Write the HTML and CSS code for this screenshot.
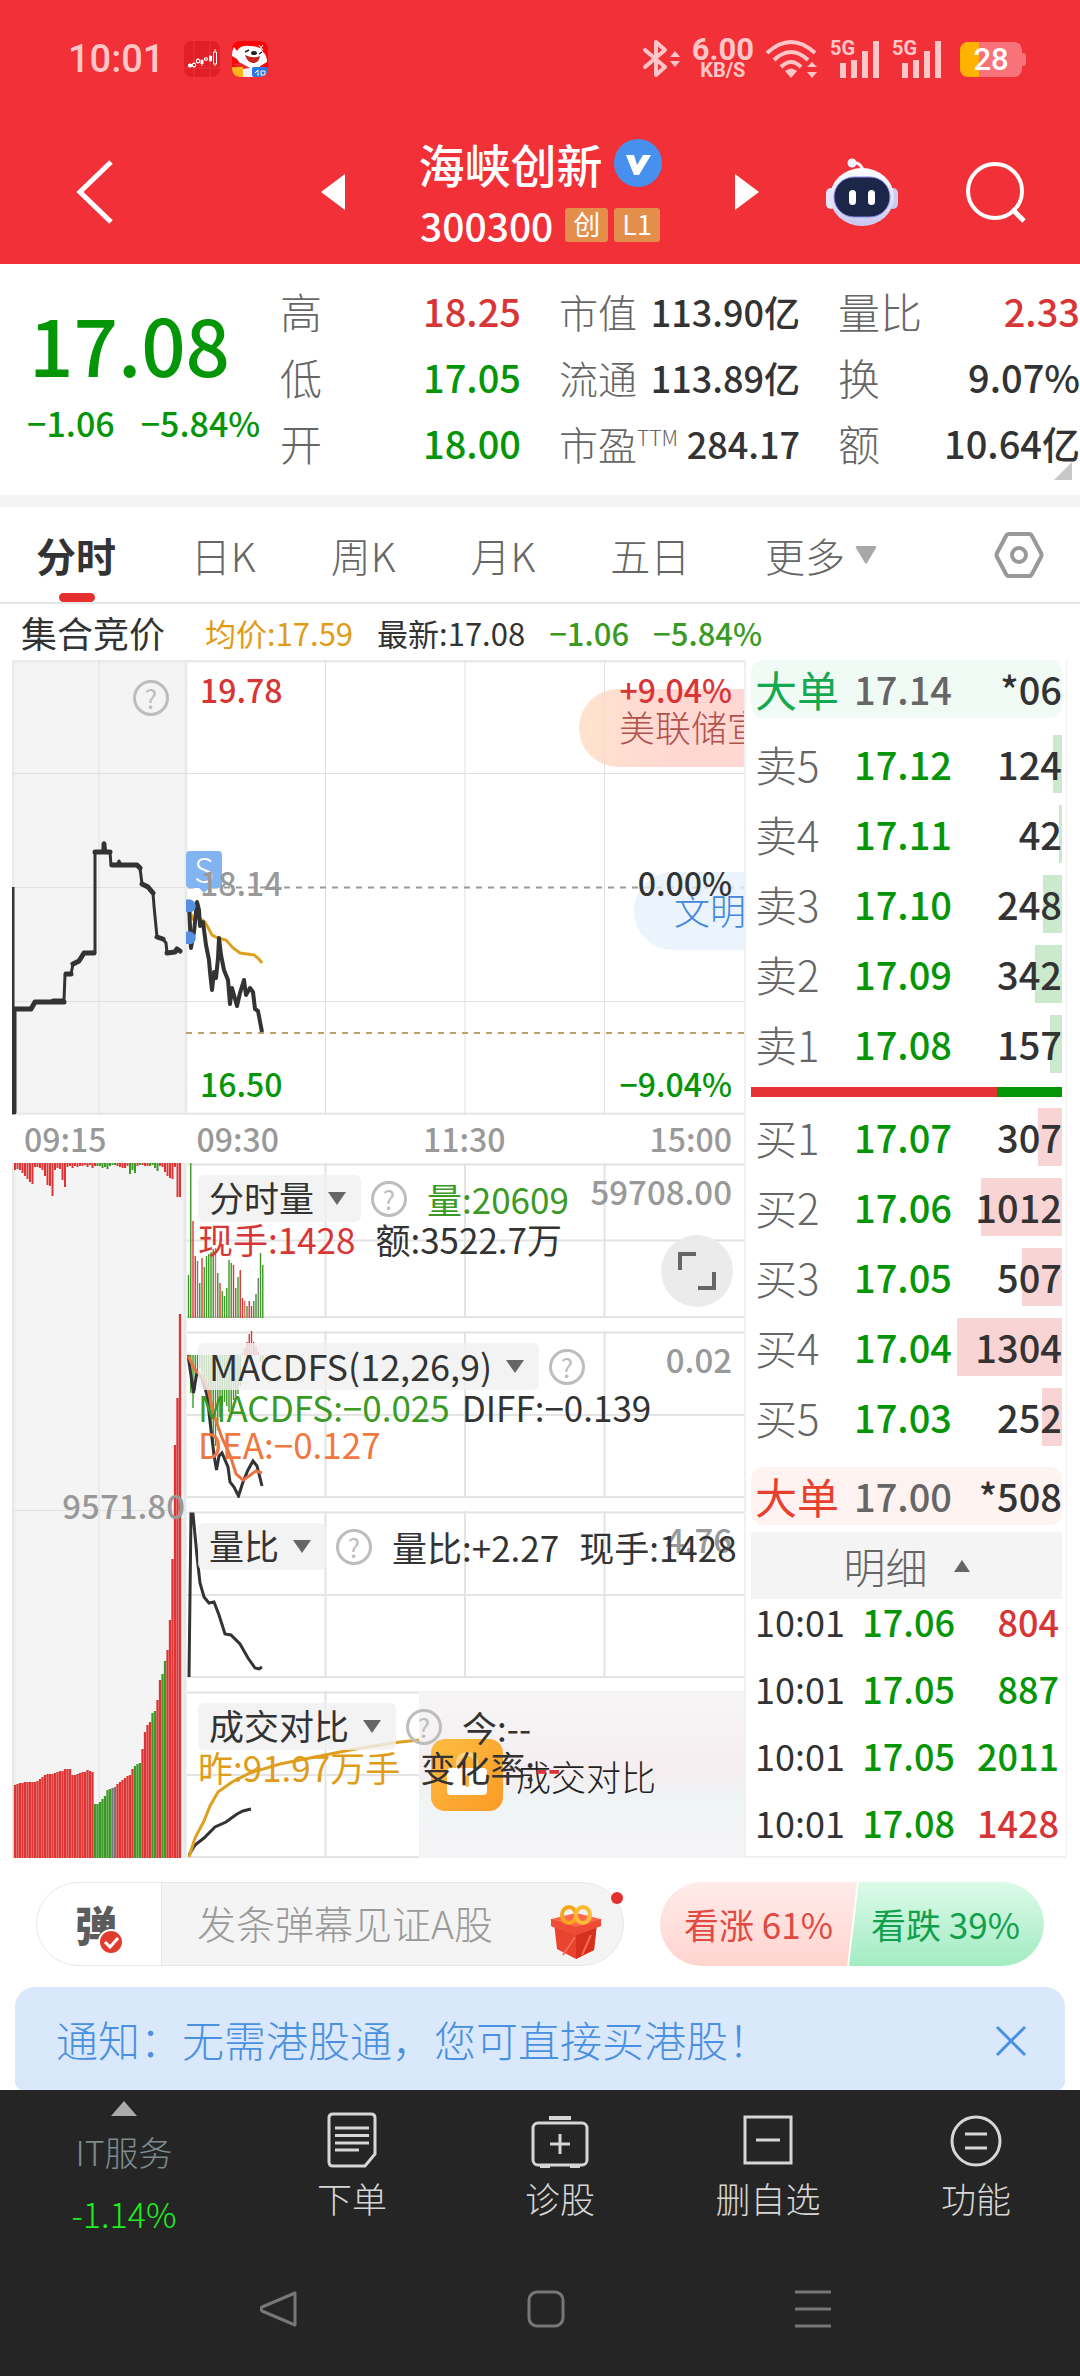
FILE: index.html
```html
<!DOCTYPE html>
<html lang="zh-CN">
<head>
<meta charset="utf-8">
<meta name="viewport" content="width=device-width, initial-scale=1">
<title>海峡创新 300300</title>
<link rel="stylesheet" href="styles.css">
</head>
<body>
<header class="top">
  <div class="status">
    <time class="clock">10:01</time>
    <svg class="app-icon" width="36" height="36" viewBox="0 0 36 36"><rect width="36" height="36" rx="8" fill="#e01f26"/><path d="M10 0V36M26 0V36M0 27H36" stroke="#e8343a"/><path d="M6 22v5M10 21v6M14 17v6M18 18v7M22 16v4M26 14v7M31 8v17" stroke="#ffd9d9" stroke-width="1"/><path d="M4 23h4v3H4zM16.500 19h3v4h-3zM25 15h3v5h-3z" fill="#fff"/><path d="M8.500 22.500h3v3h-3zM12.500 18.500h3v3h-3zM20.500 17h3v2h-3zM29.500 11h3v12h-3z" fill="#e01f26" stroke="#fff"/></svg>
    <svg class="app-icon" width="36" height="36" viewBox="0 0 36 36"><clipPath id="r"><rect width="36" height="36" rx="8"/></clipPath><g clip-path="url(#r)"><rect width="36" height="36" fill="#fb0508"/><path d="M7 36 9 25Q18 21 28 25L30 36Z" fill="#eef1f6"/><path d="M5 10Q8 4 18 5q11 0 13 6 4 3 4 10l-5 3q-3 2-12 2T8 22q-2-2-3-4l-5-3q0-6 2-9Z" fill="#fff"/><path d="M13 14q8 4 15 1-1 7-7 7-6-1-8-8z" fill="#c52520"/><path d="M13 11l4-2M27 13l3-2" stroke="#222" stroke-width="1.500"/><ellipse cx="22" cy="12" rx="3" ry="2" fill="#222"/><path d="M0 23l9-1 9 5-8 1z" fill="#e72b2f"/><rect y="26" width="11" height="10" fill="#ffb31c"/><rect x="20" y="26" width="16" height="10" rx="2" fill="#2f76e0"/><path d="M23 32l3-3v6m3-5h4v4h-4z" stroke="#fff" fill="none"/><path d="M27 4l4 5m0-5-4 5" stroke="#fff"/></g></svg>
    <div class="signals">
      <svg width="38" height="40" viewBox="0 0 38 40"><path d="M3 11 23 28 14 36V3l9 8L3 28" fill="none" stroke="#ffc6c8" stroke-width="4" stroke-linejoin="round" stroke-linecap="round"/><path d="M28 18l5-6 5 6zM28 22h10l-5 6z" fill="#ffc6c8"/></svg>
      <div class="speed"><b>6.00</b><small>KB/S</small></div>
      <svg width="52" height="40" viewBox="0 0 52 40"><g fill="none" stroke="#ffc6c8" stroke-width="4"><path d="M1 14Q25-8 49 14M8 21Q25 5 42 21M15 28Q25 18 35 28"/></g><path d="M19 32q6-5 12 0l-6 7zM41 28l5-5 5 5zM41 33h10l-5 6z" fill="#ffc6c8"/></svg>
      <div class="cell"><b>5G</b><svg width="50" height="40" viewBox="0 0 50 40"><path d="M10 24h6v15h-6zM21 21h6v18h-6zM32 12h6v27h-6zM43 2h6v37h-6z" fill="#ffc6c8"/></svg></div>
      <div class="cell"><b>5G</b><svg width="50" height="40" viewBox="0 0 50 40"><path d="M10 24h6v15h-6zM21 21h6v18h-6zM32 12h6v27h-6zM43 2h6v37h-6z" fill="#ffc6c8"/></svg></div>
      <div class="battery">28</div>
    </div>
  </div>
  <nav class="title-bar">
    <button class="bare back" aria-label="返回"><svg width="40" height="66" viewBox="0 0 40 66"><path d="M37 3 6 33 37 63" fill="none" stroke="#fff" stroke-width="5"/></svg></button>
    <button class="bare prev" aria-label="上一只"><svg width="24" height="36" viewBox="0 0 24 36"><path d="M24 0V36L0 18z" fill="#fff"/></svg></button>
    <div class="stock">
      <h1>海峡创新 <svg width="48" height="48" viewBox="0 0 48 48"><circle cx="24" cy="24" r="24" fill="#4790ee"/><path d="M12 16h8l3 10 6-10h8L25 36h-5z" fill="#fff"/></svg></h1>
      <p><span>300300</span><em>创</em><em>L1</em></p>
    </div>
    <button class="bare next" aria-label="下一只"><svg width="24" height="36" viewBox="0 0 24 36"><path d="M0 0V36L24 18z" fill="#fff"/></svg></button>
    <button class="bare robot" aria-label="助手"><svg width="74" height="70" viewBox="0 0 74 70"><defs><linearGradient id="hd" x2="0" y2="1"><stop stop-color="#fff"/><stop offset="1" stop-color="#c9c8ef"/></linearGradient></defs><path d="M26 6q10-2 12 8" fill="none" stroke="#f4f2ff" stroke-width="3"/><circle cx="27" cy="6" r="4.500" fill="#f4f2ff"/><rect x="1" y="31" width="10" height="21" rx="5" fill="#e6e6fb"/><rect x="63" y="31" width="10" height="21" rx="5" fill="#c8cdf2"/><ellipse cx="37" cy="40" rx="32" ry="29" fill="url(#hd)"/><rect x="9" y="20" width="56" height="40" rx="20" fill="#1b2648" stroke="#8b8aee" stroke-width="1"/><rect x="24" y="33" width="7" height="15" rx="3.500" fill="#fff"/><rect x="43" y="33" width="7" height="15" rx="3.500" fill="#fff"/></svg></button>
    <button class="bare search" aria-label="搜索"><svg width="62" height="64" viewBox="0 0 62 64"><circle cx="30" cy="31" r="27" fill="none" stroke="#fff" stroke-width="4"/><path d="M47 49 59 61" stroke="#fff" stroke-width="5"/></svg></button>
  </nav>
</header>

<section class="quote">
  <div class="last"><strong>17.08</strong><p><span>−1.06</span><span>−5.84%</span></p></div>
  <dl class="wide">
    <div><dt>高</dt><dd class="red">18.25</dd></div>
    <div><dt>低</dt><dd class="green">17.05</dd></div>
    <div><dt>开</dt><dd class="green">18.00</dd></div>
  </dl>
  <dl class="tight">
    <div><dt>市值</dt><dd>113.90亿</dd></div>
    <div><dt>流通</dt><dd>113.89亿</dd></div>
    <div><dt>市盈<sup>TTM</sup></dt><dd>284.17</dd></div>
  </dl>
  <dl class="wide">
    <div><dt>量比</dt><dd class="red">2.33</dd></div>
    <div><dt>换</dt><dd>9.07%</dd></div>
    <div><dt>额</dt><dd>10.64亿</dd></div>
  </dl>
  <svg class="corner" width="18" height="18" viewBox="0 0 18 18"><path d="M18 0V18H0z" fill="#c8c8c8"/></svg>
</section>

<nav class="tabs">
  <button class="bare on">分时</button>
  <button class="bare">日K</button>
  <button class="bare">周K</button>
  <button class="bare">月K</button>
  <button class="bare">五日</button>
  <button class="bare more">更多<svg width="22" height="18" viewBox="0 0 22 18"><path d="M2 0H20Q22 0 21 2L12 17q-1 1-2 0L1 2Q0 0 2 0z" fill="#a8a8a8"/></svg></button>
  <button class="bare gear" aria-label="设置"><svg width="50" height="48" viewBox="0 0 50 48"><path d="M15 3H35Q37 3 38 5L47 22q1 2 0 4L38 43q-1 2-3 2H15q-2 0-3-2L3 26q-1-2 0-4L12 5q1-2 3-2z" fill="none" stroke="#999" stroke-width="4"/><circle cx="25" cy="24" r="7" fill="none" stroke="#999" stroke-width="4"/></svg></button>
</nav>

<p class="summary"><span class="auction-label">集合竞价</span><span class="amber">均价:17.59</span><span>最新:17.08</span><span class="leaf">−1.06</span><span class="leaf">−5.84%</span></p>

<main class="board">
  <div class="charts">
    <div class="price">
      <svg class="plot" viewBox="12 660 732 455" preserveAspectRatio="none">
        <path d="M12 660H186V1115H12z" fill="#f4f4f4"/>
        <path d="M12 661H744M12 1114H744M13 660V1115M186 660V1115" stroke="#eaeaea" stroke-width="3" fill="none"/>
        <path d="M12 773.500H744M12 887.500H186M12 1001.500H744M99 660V1115M325.500 660V1115M465 660V1115M604.500 660V1115" stroke="#e0e0e0" fill="none"/>
        <path d="M188 887.500H744" stroke="#999" stroke-width="2" stroke-dasharray="6 6"/>
        <path d="M186 1033H744" stroke="#bfa06c" stroke-width="2" stroke-dasharray="6 6"/>
        <path d="M13 887V1113" stroke="#333" stroke-width="3"/>
        <path d="M12 1113 14 1111V1009H31L35 1002H50L53 1000H64L65 975 71 974 73 964 79 961 84 953 95 952V852H103L104 843 106 852H110L111 865 118 864 119 861 121 865H137L140 868 142 884 148 887 153 893 154 906 157 937 163 939 166 943 167 953 175 952 177 949 180 951" fill="none" stroke="#333" stroke-width="3" stroke-linejoin="round" stroke-linecap="round"/>
        <path d="M14 1009V1112M14 1009H31L35 1002H64M66 974H71M73 964 79 961 84 953H94M95 852H110M104 844V852M112 865H137L140 868M142 884 148 887 153 893M157 937 163 939M167 953 175 952 177 949 180 951" fill="none" stroke="#333" stroke-width="5" stroke-linejoin="round" stroke-linecap="round"/>
        <path d="M190 851H218Q222 851 222 855V884Q222 888 218 888H209L204 893 199 888H190Q186 888 186 884V855Q186 851 190 851z" fill="#82b4f2"/>
        <path d="M190 912 193 919 199 918 205 922 212 935 218 938 226 940 233 948 240 953 254 955 258 958 262 963" fill="none" stroke="#dfa022" stroke-width="3"/>
        <path d="M189 905 191 948 194 932 197 902 199 910 200 926 203 922 206 945 209 960 210 972 212 990 214 972 216 978 218 958 219 938 221 955 224 970 228 980 230 1004 232 988 237 1006 240 993 244 980 246 995 250 988 253 992 255 1009 258 1011 262 1032" fill="none" stroke="#333" stroke-width="4" stroke-linejoin="round"/>
        <path d="M186 900a6 6 0 0 1 6 12h-6zM186 932a6 6 0 0 1 6 12h-6z" fill="#5590e0"/>
      </svg>
      <button class="bare help auction-help" aria-label="集合竞价说明">?</button>
      <span class="marker">S</span>
      <a class="bubble warm" href="#fed">美联储宣</a>
      <a class="bubble cool" href="#civil">文明</a>
      <span class="axis high red">19.78</span><span class="axis mid grey">18.14</span><span class="axis low green">16.50</span>
      <span class="axis pct high red">+9.04%</span><span class="axis pct mid">0.00%</span><span class="axis pct low green">−9.04%</span>
    </div>
    <div class="times"><time>09:15</time><time>09:30</time><time>11:30</time><time>15:00</time></div>
    <div class="lower">
      <div class="auction-volume">
        <svg class="plot" viewBox="12 1163 175 695" preserveAspectRatio="none">
          <path d="M12 1163H186V1858H12z" fill="#f4f4f4"/>
          <path d="M12 1163.500H186M13 1163V1858M185 1163V1858" stroke="#e8e8e8" stroke-width="3"/>
          <path d="M99 1163V1858M12 1510.500H186" stroke="#e0e0e0"/>
          <g id="auction-top"></g><g id="auction-bottom"></g>
        </svg>
        <span class="scale">9571.80</span>
      </div>
      <div class="panels">
        <section class="panel short">
          <svg class="plot" viewBox="187 1163 557 155" preserveAspectRatio="none">
            <path class="grid" d="M187 1164.500H744M187 1240.500H744M187 1317H744M325.500 1163V1318M465 1163V1318M604.500 1163V1318"/>
            <g id="minute-volume"></g>
          </svg>
          <div class="line"><label class="chip"><select aria-label="指标一"><option>分时量</option></select><i></i></label><button class="bare help" aria-label="说明">?</button><span class="leaf">量:20609</span></div>
          <div class="line"><span class="red">现手:1428</span><span>额:3522.7万</span></div>
          <span class="scale">59708.00</span>
          <button class="bare expand" aria-label="全屏"><svg width="38" height="38" viewBox="0 0 38 38"><path d="M2 18V2H18M36 20V36H20" fill="none" stroke="#666" stroke-width="4"/></svg></button>
        </section>
        <section class="panel">
          <svg class="plot" viewBox="187 1331 557 167" preserveAspectRatio="none">
            <path class="grid" d="M187 1332.500H744M187 1415H744M187 1497H744M325.500 1331V1498M465 1331V1498M604.500 1331V1498"/>
            <g id="macd-bars"></g>
            <path d="M188 1355 193.500 1393 197 1372 202 1378 207 1395 211 1430 214 1455 216.500 1470 219 1456 222 1453 228 1467 230 1482 234 1487 238.500 1496 243 1482 248 1470 253 1461 257 1466 262 1486" fill="none" stroke="#333" stroke-width="3"/>
            <path d="M188 1356 195 1370 202 1376 208 1388 213 1412 222 1438 230 1455 236 1474 243 1480 249 1476 256 1471 262 1473" fill="none" stroke="#ea7440" stroke-width="3"/>
          </svg>
          <div class="line"><label class="chip formula"><select aria-label="指标二"><option>MACDFS(12,26,9)</option></select><i></i></label><button class="bare help" aria-label="说明">?</button></div>
          <div class="line snug"><span class="leaf">MACDFS:−0.025</span><span>DIFF:−0.139</span></div>
          <div class="line"><span class="orange">DEA:−0.127</span></div>
          <span class="scale">0.02</span>
        </section>
        <section class="panel">
          <svg class="plot" viewBox="187 1511 557 167" preserveAspectRatio="none">
            <path class="grid" d="M187 1512.500H744M187 1595H744M187 1677H744M325.500 1511V1678M465 1511V1678M604.500 1511V1678"/>
            <path d="M189 1677 191 1514H193L197 1556 200 1583 204 1597 209 1603 214 1602 219 1615 225 1634 231 1635 240 1644 248 1658 255 1668 259 1669 262 1667" fill="none" stroke="#333" stroke-width="3"/>
          </svg>
          <span class="scale">4.76</span>
          <div class="line"><label class="chip"><select aria-label="指标三"><option>量比</option></select><i></i></label><button class="bare help" aria-label="说明">?</button><span>量比:+2.27</span><span>现手:1428</span></div>
        </section>
        <section class="panel">
          <svg class="plot" viewBox="187 1691 557 167" preserveAspectRatio="none">
            <path class="grid" d="M187 1692.500H744M187 1775H744M187 1857H744M325.500 1691V1858"/>
            <path d="M189 1855 195 1845 204 1838 215 1827 226 1822 237 1814 243 1811 251 1809" fill="none" stroke="#333" stroke-width="3"/>
            <path d="M189 1857 195 1838 204 1821 210 1806 218 1792 232 1782 250 1773 280 1764 310 1758 350 1750 380 1745 400 1742 420 1740" fill="none" stroke="#dfa022" stroke-width="3"/>
          </svg>
          <div class="locked"><svg width="72" height="72" viewBox="0 0 72 72"><defs><linearGradient id="lk" x2="1" y2="1"><stop stop-color="#fdbd42"/><stop offset="1" stop-color="#fb9a26"/></linearGradient></defs><rect width="72" height="72" rx="14" fill="url(#lk)"/><path d="M27 30V24a9 9 0 0 1 18 0v6" fill="none" stroke="#fdd58a" stroke-width="4"/><rect x="16" y="29" width="40" height="27" rx="4" fill="#fff"/><path d="M36 38v8" stroke="#fbb040" stroke-width="4" stroke-linecap="round"/></svg><span>成交对比</span></div>
          <div class="line"><label class="chip"><select aria-label="指标四"><option>成交对比</option></select><i></i></label><button class="bare help" aria-label="说明">?</button><span>今:--</span></div>
          <div class="line"><span class="amber">昨:91.97万手</span><span>变化率:<b class="red">--</b></span></div>
        </section>
      </div>
    </div>
  </div>

  <aside class="book">
    <div class="order big sell"><span>大单</span><span>17.14</span><span>*06</span></div>
    <div class="ladder asks">
      <div class="order"><span>卖5</span><span>17.12</span><span>124</span><i style="width:9px"></i></div>
      <div class="order"><span>卖4</span><span>17.11</span><span>42</span><i style="width:3px"></i></div>
      <div class="order"><span>卖3</span><span>17.10</span><span>248</span><i style="width:19px"></i></div>
      <div class="order"><span>卖2</span><span>17.09</span><span>342</span><i style="width:27px"></i></div>
      <div class="order"><span>卖1</span><span>17.08</span><span>157</span><i style="width:12px"></i></div>
    </div>
    <div class="ratio"></div>
    <div class="ladder bids">
      <div class="order"><span>买1</span><span>17.07</span><span>307</span><i style="width:24px"></i></div>
      <div class="order"><span>买2</span><span>17.06</span><span>1012</span><i style="width:81px"></i></div>
      <div class="order"><span>买3</span><span>17.05</span><span>507</span><i style="width:40px"></i></div>
      <div class="order"><span>买4</span><span>17.04</span><span>1304</span><i style="width:105px"></i></div>
      <div class="order"><span>买5</span><span>17.03</span><span>252</span><i style="width:20px"></i></div>
    </div>
    <div class="order big buy"><span>大单</span><span>17.00</span><span>*508</span></div>
    <button class="bare detail">明细<svg width="16" height="12" viewBox="0 0 16 12"><path d="M8 0 16 12H0z" fill="#666"/></svg></button>
    <table class="trades">
      <tr><td>10:01</td><td>17.06</td><td class="red">804</td></tr>
      <tr><td>10:01</td><td>17.05</td><td class="green">887</td></tr>
      <tr><td>10:01</td><td>17.05</td><td class="green">2011</td></tr>
      <tr><td>10:01</td><td>17.08</td><td class="red">1428</td></tr>
    </table>
  </aside>
</main>

<section class="social">
  <div class="chat">
    <button class="bare danmu" aria-label="弹幕开关">弹<svg width="26" height="26" viewBox="0 0 26 26"><circle cx="13" cy="13" r="12" fill="#e03c30" stroke="#fff" stroke-width="2"/><path d="M7 13l5 5 8-9" fill="none" stroke="#fff" stroke-width="3"/></svg></button>
    <input type="text" placeholder="发条弹幕见证A股" aria-label="弹幕">
    <button class="bare gift" aria-label="礼物"><svg width="50" height="54" viewBox="0 0 50 54"><path d="M3 18 24 27 46 18 43 45 25 54 6 44z" fill="#e8432f"/><path d="M25 27 46 18 43 45 25 54z" fill="#d6301f"/><path d="M0 14 25 8 50 14V21L25 30 0 21z" fill="#fb6a4d"/><path d="M0 14 25 22 50 14V21L25 30 0 21z" fill="#ee4c35"/><ellipse cx="18" cy="10" rx="7" ry="8" fill="none" stroke="#f6a71c" stroke-width="4"/><ellipse cx="32" cy="10" rx="7" ry="8" fill="none" stroke="#fdbb35" stroke-width="4"/><path d="M12 50 24 32M31 50 40 30" stroke="#f8694e" stroke-width="2"/></svg></button>
    <span class="dot"></span>
  </div>
  <div class="vote"><button class="bare up">看涨 61%</button><button class="bare down">看跌 39%</button></div>
</section>

<section class="notice"><p>通知：无需港股通，您可直接买港股！</p><button class="bare" aria-label="关闭"><svg width="32" height="32" viewBox="0 0 32 32"><path d="M2 2 30 30M30 2 2 30" stroke="#4a90e0" stroke-width="3"/></svg></button></section>

<footer class="dock">
  <nav class="actions">
    <a class="index" href="#it"><svg width="26" height="15" viewBox="0 0 26 15"><path d="M13 0 26 15H0z" fill="#aaa"/></svg><span>IT服务</span><b>-1.14%</b></a>
    <a href="#order"><svg width="60" height="56" viewBox="0 0 60 56"><path d="M11 2H49Q53 2 53 6V42L43 54H11Q7 54 7 50V6Q7 2 11 2z" fill="none" stroke="#d6d6d6" stroke-width="3"/><path d="M13 16H47M13 23.500H47M13 31H47M13 38H37" stroke="#d6d6d6" stroke-width="3"/></svg>下单</a>
    <a href="#check"><svg width="60" height="56" viewBox="0 0 60 56"><rect x="3" y="11" width="54" height="42" rx="5" fill="none" stroke="#d6d6d6" stroke-width="3"/><path d="M19 6H41M10 55H20M40 55H50" stroke="#d6d6d6" stroke-width="4"/><path d="M30 22V42M20 32H40" stroke="#d6d6d6" stroke-width="3"/></svg>诊股</a>
    <a href="#remove"><svg width="60" height="56" viewBox="0 0 60 56"><rect x="7" y="5" width="46" height="46" fill="none" stroke="#d6d6d6" stroke-width="3"/><path d="M18 28H42" stroke="#d6d6d6" stroke-width="3"/></svg>删自选</a>
    <a href="#features"><svg width="60" height="56" viewBox="0 0 60 56"><circle cx="30" cy="29" r="24" fill="none" stroke="#d6d6d6" stroke-width="3"/><path d="M19 22H41M19 36H41" stroke="#d6d6d6" stroke-width="3"/></svg>功能</a>
  </nav>
  <nav class="system">
    <button class="bare" aria-label="返回"><svg width="38" height="38" viewBox="0 0 38 38"><path d="M35 3V35L2 21Q0 19 2 17z" fill="none" stroke="#777" stroke-width="3" stroke-linejoin="round"/></svg></button>
    <button class="bare" aria-label="主屏幕"><svg width="38" height="38" viewBox="0 0 38 38"><rect x="2" y="2" width="34" height="34" rx="8" fill="none" stroke="#777" stroke-width="3"/></svg></button>
    <button class="bare" aria-label="最近任务"><svg width="38" height="38" viewBox="0 0 38 38"><path d="M1 2H37M1 19H37M1 36H37" stroke="#777" stroke-width="3"/></svg></button>
  </nav>
</footer>
<script src="charts.js"></script>
</body>
</html>
```
FILE: styles.css
```css
* { box-sizing: border-box; }
body { margin: 0; background: #fff; color: #333; font-family: "Noto Sans CJK SC", sans-serif; font-size: 35px; }
h1, p, dl, dd { margin: 0; }
svg { display: block; flex: none; }
a { color: inherit; text-decoration: none; }
.bare { border: 0; padding: 0; background: none; font: inherit; color: inherit; }
.red { color: #d83636; }
.green { color: #059608; }
.leaf { color: #3a9a24; }
.amber { color: #e09c18; }
.orange { color: #f07840; }
.grey { color: #999; }

.top { background: #f23038; color: #fff; }
.status { display: flex; align-items: center; gap: 12px; height: 120px; padding: 0 54px 2px 68px; color: #ffc6c8; font-family: Roboto, sans-serif; }
.clock { font-size: 38px; font-weight: 500; margin-right: 8px; }
.signals { display: flex; align-items: center; gap: 12px; margin-left: auto; }
.speed { display: grid; justify-items: center; }
.speed b { font-size: 31px; font-weight: 700; line-height: 22px; }
.speed small { font-size: 20px; font-weight: 700; line-height: 18px; }
.cell { position: relative; }
.cell b { position: absolute; left: 0; top: -2px; font-size: 20px; line-height: 22px; }
.battery { position: relative; width: 62px; height: 35px; margin: 0 4px 0 6px; border-radius: 8px; background: linear-gradient(90deg, #ffb300 30%, #f77379 30%); color: #fff; font-size: 31px; font-weight: 500; line-height: 36px; text-align: center; }
.battery::after { content: ""; position: absolute; left: 62px; top: 11px; width: 4px; height: 13px; border-radius: 0 3px 3px 0; background: #f77379; }
.title-bar { display: grid; grid-template-columns: 321px 24px 1fr 24px 66px 74px 66px 62px 53px; align-items: center; height: 144px; }
.title-bar .back { padding: 0 0 0 74px; }
.title-bar .robot { grid-column: 6; }
.title-bar .search { grid-column: 8; }
.stock { display: grid; justify-items: center; }
.stock h1 { display: flex; align-items: center; gap: 11px; font-size: 46px; font-weight: 500; line-height: 66px; }
.stock p { display: flex; align-items: center; font-size: 39px; font-weight: 500; line-height: 58px; }
.stock em { margin-left: 6px; padding: 0 8px 2px; border-radius: 3px; background: #e48e4c; font-size: 27px; font-style: normal; font-weight: 400; line-height: 32px; }
.stock span { margin-right: 6px; }

.quote { position: relative; display: grid; grid-template-columns: 262px 241px 241px 1fr; column-gap: 38px; height: 243px; padding: 14px 0 0; border-bottom: 12px solid #f4f4f4; font-size: 36px; line-height: 66px; }
.quote > .last { margin-right: -38px; padding: 15px 0 0 29px; color: #059608; }
.quote > .wide { margin-left: -20px; }
.quote > .tight { margin-left: -20px; }
.quote > dl { margin-right: 20px; }
.quote > dl:last-of-type { margin-right: 0; }
.last strong { display: block; font-size: 78px; font-weight: 500; line-height: 100px; }
.last p { display: flex; gap: 26px; margin-left: -2px; font-size: 34px; font-weight: 500; line-height: 60px; white-space: nowrap; }
.quote dl div { display: flex; justify-content: space-between; white-space: nowrap; }
.quote dt { color: #666; font-size: 39px; font-weight: 300; }
.quote dd { font-weight: 500; }
.quote .wide dt { font-size: 42px; }
.wide dd { font-size: 38px; }
.quote sup { font-size: 21px; line-height: 20px; vertical-align: 14px; }
.corner { position: absolute; right: 8px; bottom: 15px; }

.tabs { display: flex; align-items: center; height: 97px; padding: 0 36px; border-bottom: 2px solid #e6e6e6; color: #666; font-size: 40px; font-weight: 300; justify-content: space-between; }
.tabs .on { position: relative; color: #333; font-weight: 700; }
.tabs .on::after { content: ""; position: absolute; left: 23px; bottom: -18px; width: 36px; height: 9px; border-radius: 5px; background: #e63030; }
.tabs .more { display: flex; align-items: center; gap: 10px; }
.tabs .gear { margin-left: 42px; }
.summary { display: flex; gap: 24px; padding: 0 21px; font-size: 31px; line-height: 57px; height: 56px; white-space: nowrap; }
.summary .auction-label { margin-right: 16px; font-size: 36px; }
.summary .leaf { font-weight: 500; }

.board { display: grid; grid-template-columns: 1fr 323px; padding: 0 13px 0 12px; }
.plot { position: absolute; inset: 0; width: 100%; height: 100%; }
.grid { fill: none; stroke: #e4e4e4; stroke-width: 2; }
.price { position: relative; height: 455px; overflow: hidden; }
.axis { position: absolute; left: 188px; font-size: 32px; font-weight: 500; line-height: 40px; }
.axis.pct { left: auto; right: 12px; }
.axis.high { top: 9px; }
.axis.mid { top: 202px; }
.axis.low { top: 403px; }
.help { width: 36px; height: 36px; flex: none; border: 3px solid #bdbdbd; border-radius: 50%; color: #bdbdbd; font-size: 26px; line-height: 28px; }
.auction-help { position: absolute; left: 121px; top: 20px; }
.marker { position: absolute; left: 182px; top: 189px; color: #fff; font-size: 34px; font-weight: 300; line-height: 40px; }
.bubble { position: absolute; right: 0; height: 78px; padding-left: 40px; border-radius: 39px 0 0 39px; overflow: hidden; font-size: 36px; font-weight: 300; line-height: 75px; white-space: nowrap; }
.bubble.warm { top: 29px; width: 165px; background: linear-gradient(90deg, #ffdcc2cc, #ffcdc8cc 60%); color: #b0524c; }
.bubble.cool { top: 212px; width: 110px; background: #e6f0fdcc; color: #4288dc; }
.times { display: flex; height: 48px; padding: 0 12px; justify-content: space-between; color: #999; font-size: 32px; font-weight: 500; line-height: 46px; }
.times time:nth-child(2) { margin: 0 54px 0 0; }
.times time:nth-child(3) { margin-right: 54px; }
.lower { display: grid; grid-template-columns: 175px 1fr; }
.auction-volume { position: relative; }
.auction-volume .scale { right: 2px; top: 322px; }
.scale { position: absolute; right: 12px; top: 8px; color: #999; font-size: 33px; font-weight: 500; line-height: 40px; }
.panels { display: grid; gap: 13px; }
.panel { position: relative; height: 167px; padding: 12px 0 0 11px; overflow: hidden; }
.panel.short { height: 155px; }
.line { position: relative; display: flex; align-items: center; gap: 20px; line-height: 37px; white-space: nowrap; }
.line + .line { top: -2px; }
.line.snug { gap: 12px; }
.chip { position: relative; display: flex; margin-right: -10px; border-radius: 6px; background: #f0f0f0d0; }
.chip select { appearance: none; height: 47px; border: 0; margin: 0; padding: 0 46px 3px 11px; background: none; color: #333; font: inherit; font-size: 35px; line-height: 44px; opacity: 1; }
.formula select { font-size: 36px; }
.chip i { position: absolute; right: 15px; top: 17px; border: 9px solid transparent; border-top: 13px solid #666; border-bottom: 0; }
.expand { position: absolute; right: 11px; top: 72px; display: grid; place-items: center; width: 72px; height: 72px; border-radius: 50%; background: #ebebeb; }
.locked { position: absolute; left: 232px; right: 0; top: 1px; bottom: 0; display: flex; align-items: center; gap: 13px; padding-left: 12px; background: linear-gradient(#f6f5f6, #f6f0f2 35%, #f5edef 45%, #eff4f5 65%, #f5f4f7 90%); font-weight: 300; color: #222; }
.line b { font-weight: 700; }

.book { display: flex; flex-direction: column; padding: 0 4px 8px 5px; border: 2px solid #f0f0f0; border-right-width: 1px; border-top: 0; font-size: 38px; }
.order { position: relative; display: grid; grid-template-columns: 99px 1fr auto; padding-left: 4px; line-height: 70px; }
.order span { position: relative; z-index: 1; font-weight: 500; }
.order span:nth-child(1) { color: #666; font-size: 42px; font-weight: 300; }
.order span:nth-child(2) { color: #059608; }
.order i { position: absolute; right: 0; top: 6px; height: 58px; }
.order.big { border-radius: 12px; line-height: 58px; }
.order.big span:nth-child(1) { font-weight: 400; }
.order.big span:nth-child(2) { color: #666; }
.order.sell { background: #f1fbf6; }
.order.buy { background: #fff3f2; }
.order.sell span:nth-child(1) { color: #14a850; }
.order.buy span:nth-child(1) { color: #e8402f; }
.asks { padding: 11px 0 8px; }
.asks i { background: #cbe9cc; }
.bids { padding: 5px 0 15px; }
.bids i { background: #f8d4d4; }
.ratio { height: 10px; background: linear-gradient(90deg, #e63232 79%, #059608 79%); }
.detail { display: flex; align-items: center; justify-content: center; gap: 26px; height: 67px; margin-top: 7px; background: #f4f4f4; color: #666; font-size: 42px; font-weight: 300; line-height: 60px; }
.trades { width: 100%; border-spacing: 0; font-size: 36px; line-height: 45px; }
.trades td { height: 67px; padding: 0 3px 0 0; text-align: right; vertical-align: top; font-weight: 500; }
.trades td:first-child { width: 97px; text-align: left; padding-left: 4px; font-weight: 400; }
.trades td:nth-child(2) { width: 110px; color: #059608; }
.trades tr:last-child td { height: 46px; }

.social { display: flex; justify-content: space-between; gap: 36px; padding: 24px 36px 21px; }
.chat { position: relative; display: flex; align-items: center; flex: 1; min-width: 0; height: 84px; border: 1px solid #e8e8e8; border-radius: 42px; background: linear-gradient(90deg, #fff 124px, #e8e8e8 124px, #e8e8e8 125px, #f4f4f4 125px); }
.danmu { position: relative; flex: none; width: 124px; padding-right: 6px; color: #5c5c5c; font-size: 42px; font-weight: 900; line-height: 68px; }
.danmu svg { position: absolute; left: 61px; top: 39px; }
.chat input { flex: 1; min-width: 0; border: 0; padding: 0 0 4px 36px; background: none; font: inherit; font-size: 39px; font-weight: 300; color: #333; }
.chat input::placeholder { color: #999; opacity: 1; }
.gift { flex: none; margin: 16px 22px 0 0; }
.dot { position: absolute; right: 0; top: 9px; width: 12px; height: 12px; border-radius: 50%; background: #e63030; }
.vote { display: flex; flex: none; width: 384px; overflow: hidden; border-radius: 42px; line-height: 80px; }
.vote button { flex: 1; }
.up { margin-right: -5px; background: linear-gradient(#ffecea, #ffd4cf); clip-path: polygon(0 0, 100% 0, 95% 100%, 0 100%); color: #e04a42; }
.down { margin-left: -5px; background: linear-gradient(#dcfae9, #a3ecc2); clip-path: polygon(6% 0, 100% 0, 100% 100%, 1% 100%); color: #12a04e; }
.notice { display: flex; align-items: center; justify-content: space-between; height: 103px; margin: 0 15px; padding: 0 38px 0 41px; border-radius: 20px 20px 8px 8px; background: #dae8fb; color: #4a90e0; font-size: 42px; font-weight: 300; line-height: 106px; }
.notice button { padding-top: 4px; }

.dock { background: #252525; color: #d6d6d6; font-weight: 300; }
.actions { display: grid; grid-template-columns: 248px repeat(4, 1fr); height: 156px; font-size: 35px; line-height: 56px; }
.actions a { display: flex; flex-direction: column; align-items: center; padding-top: 22px; gap: 2px; }
.actions .index { padding-top: 11px; gap: 8px; color: #7d8c8c; font-size: 34px; }
.index b { color: #1ef01e; font-weight: 300; margin-top: -2px; }
.system { display: grid; grid-template-columns: repeat(3, 1fr); justify-items: center; align-items: center; height: 130px; padding: 0 133px 4px 145px; }
```
FILE: charts.js
```js
// Draws thin volume bars from a shared base line; each entry is [colour key, y of the bar's end].
const colours = { r: '#e03434', g: '#3a9a24', k: '#777', p: '#e06a6a' };
function bars(id, x, step, base, width, data) {
  const group = document.getElementById(id);
  data.trim().split(/\s+/).forEach((item, i) => {
    const line = document.createElementNS('http://www.w3.org/2000/svg', 'path');
    line.setAttribute('d', `M${x + i * step} ${base}V${item.slice(1)}`);
    line.setAttribute('stroke', colours[item[0]]);
    line.setAttribute('stroke-width', width);
    group.appendChild(line);
  });
}
bars('auction-top', 15, 2.5, 1163, 2, `r1170 r1169 r1170 r1173 r1176 r1179 r1182 r1184 r1167 r1167 r1168 r1170
 r1176 r1185 r1186 r1196 r1170 r1168 r1169 r1180 r1187 r1167 r1166 r1168 r1166 r1167 r1166 r1166 r1165 r1167 r1165 r1168 r1166
 g1166 g1166 g1168 g1167 g1169 g1166 g1165 g1165 r1166 r1167 r1168 r1168 r1166 g1174 g1170 g1173 r1166
 g1165 r1165 r1166 r1166 g1166 g1165 g1168 g1171 r1166 r1167 r1172 r1176 r1178 r1179 r1167 r1197 r1197`);
bars('auction-bottom', 15, 2.5, 1858, 2.3, `r1785 r1784 r1783 r1783 r1782 r1782 r1782 r1782 r1782 r1781 r1779 r1777
 r1775 r1774 r1774 r1774 r1773 r1772 r1771 r1771 r1769 r1769 r1769 r1775 r1775 r1774 r1773 r1772 r1772 r1770 r1771 r1772
 g1804 g1804 g1802 g1799 g1796 g1790 g1789 k1788 k1787 r1784 r1782 r1780 r1778 r1776 r1775 r1769
 g1766 g1764 g1763 r1749 r1732 r1725 r1722 g1713 g1711 r1700 r1680 g1674 g1661 r1650 r1620 r1559 r1445 r1398 r1314`);
bars('minute-volume', 188.500, 2.25, 1318, 1.4, `g1275 g1163 r1221 r1256 k1261 g1283 r1258 g1267 g1256 g1254 g1252
 g1249 p1248 g1273 r1283 g1291 g1296 g1288 g1260 g1263 r1265 g1288 g1277 r1270 r1298 p1301 g1306 r1301 r1306 g1301 g1294 k1278 g1253 g1265`);
bars('macd-bars', 188.500, 2.25, 1355, 1.4, `g1362 g1393 g1408 g1390 g1375 g1368 g1372 g1382 g1396 g1412 g1434
 g1447 g1446 g1430 g1417 g1406 g1402 g1406 g1412 g1410 g1400 g1396 g1394 g1386 r1353 r1348 r1342 r1334 r1331 r1342 r1346 r1352 g1362 g1372`);
```
